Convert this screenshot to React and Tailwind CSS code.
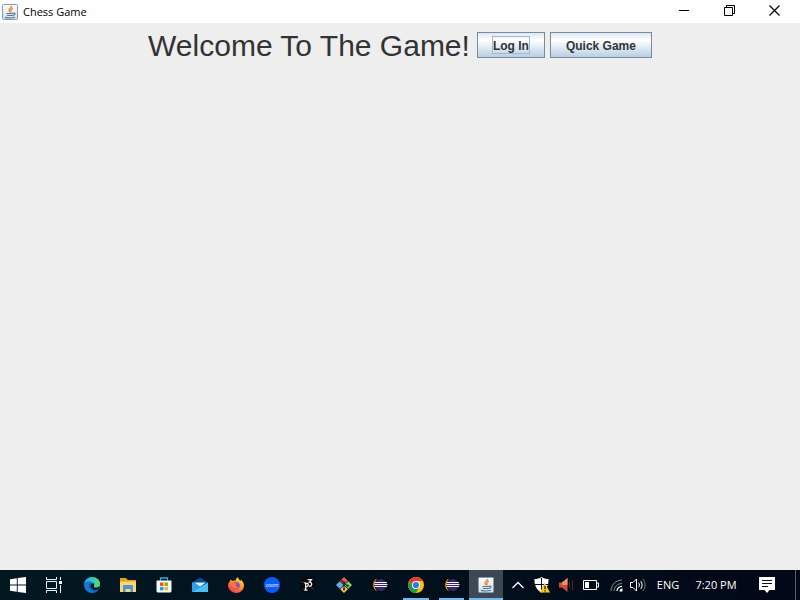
import React from "react";

function JavaIcon({ size = 16 }) {
  return (
    <svg width={size} height={size} viewBox="0 0 16 16" aria-hidden="true">
      <defs>
        <linearGradient id="javaTile" x1="0" y1="0" x2="0" y2="1">
          <stop offset="0" stopColor="#fdfdfd" />
          <stop offset="1" stopColor="#d5dde3" />
        </linearGradient>
      </defs>
      <rect x="0.5" y="0.5" width="15" height="15" rx="1" fill="url(#javaTile)" stroke="#7f9db5" />
      <path d="M9.8 2C10 3.8 6.4 4.4 7 6.2C7.2 7 8 7.4 8 8.3M10.8 4.4C8.8 5.2 8.4 6 9.1 7C9.3 7.5 9 8 8.6 8.3" fill="none" stroke="#e8842c" strokeWidth="1.3" />
      <path d="M4.5 9.5h6.5M5 11.5h5.5M3 13.4c2.5.6 7.5.6 10-.2M11 9.2c2.8-.6 2.6 1.8-.4 2.3" fill="none" stroke="#4b7799" strokeWidth="1.2" />
    </svg>
  );
}

function WindowButton({ label, children }) {
  return (
    <button type="button" aria-label={label} className="flex h-[21px] w-[45px] items-center justify-center">
      {children}
    </button>
  );
}

function TitleBar() {
  return (
    <header className="flex h-[23px] items-center bg-white pl-0.5 text-black">
      <JavaIcon />
      <h1 className="ml-[5px] flex-1 font-['Open_Sans','Noto_Sans',sans-serif] text-[11px] leading-4">Chess Game</h1>
      <div className="flex h-full items-start pr-[3px]">
        <WindowButton label="Minimize">
          <svg width="11" height="11" viewBox="0 0 11 11" stroke="#000">
            <path d="M0 5.5h10" />
          </svg>
        </WindowButton>
        <WindowButton label="Restore">
          <svg width="11" height="11" viewBox="0 0 11 11" fill="none" stroke="#000">
            <path d="M.5 2.5h8v8h-8zM2.5 2.5v-2h8v8h-2" />
          </svg>
        </WindowButton>
        <WindowButton label="Close">
          <svg width="11" height="11" viewBox="0 0 11 11" stroke="#000" strokeWidth="1.2">
            <path d="M.5.5l10 10M10.5.5l-10 10" />
          </svg>
        </WindowButton>
      </div>
    </header>
  );
}

function MetalButton({ focused, children }) {
  return (
    <button
      type="button"
      className="flex h-[26px] items-center justify-center border border-[#7a8a99] bg-linear-to-b from-[#dde8f3] via-white via-30% to-[#b8cfe5] px-[14px] font-['Liberation_Sans',Arial,sans-serif] text-xs font-bold text-[#333]"
    >
      <span
        className={`border pt-0.5 leading-[14px] whitespace-nowrap ${focused ? "border-[#a3b8cc]" : "border-transparent"}`}
      >
        {children}
      </span>
    </button>
  );
}

function WindowsIcon() {
  return (
    <svg width="16" height="16" viewBox="0 0 16 16" fill="#fff">
      <path d="M0 2.2L6.8 1.2v6.3H0zM7.7 1.1L16 0v7.5H7.7zM0 8.4h6.8v6.4L0 13.8zM7.7 8.4H16V16l-8.3-1.1z" />
    </svg>
  );
}

function TaskViewIcon() {
  return (
    <svg width="16" height="16" viewBox="0 0 16 16" fill="none" stroke="#e8edef">
      <path d="M.5 0v2.5h10V0M.5 4.5h10v7H.5zM.5 16v-2.5h10V16M14.5 0v3M14.5 8v8" />
      <path d="M13 4h3v3h-3z" fill="#fff" stroke="none" />
    </svg>
  );
}

function EdgeIcon() {
  return (
    <svg width="16" height="16" viewBox="0 0 16 16">
      <defs>
        <linearGradient id="edgeTop" x1="0" y1="0.4" x2="1" y2="0.4">
          <stop offset="0" stopColor="#1b9de2" />
          <stop offset="0.5" stopColor="#32c4c4" />
          <stop offset="1" stopColor="#62db57" />
        </linearGradient>
      </defs>
      <circle cx="8" cy="8" r="8" fill="#1479d0" />
      <path d="M.1 7C.8 2.9 4 0 8 0c4.6 0 8 3.2 8 6.7 0 2.5-1.9 4-4.1 4-2 0-2.7-.8-2.2-1.5.7-1.1.5-2.3-.4-3.2C7.1 4 2.1 4 .1 7z" fill="url(#edgeTop)" />
      <path d="M6 6.1C4.3 8 4.8 12 8.4 14c2.5 1.2 4.8.5 6.2-.8C10 15 6.5 12 6.8 9c.1-1 .5-1.7 1-2.1-.4-.6-1-.9-1.8-.8z" fill="#12529c" />
      <path d="M9.3 6.2c1.2 1 1 2.3.4 3-.5.7.2 1.5 2.2 1.5 1.5 0 2.8-.6 3.5-1.7-.2 1.5-.6 2.7-1.3 3.5-3.5 1.4-7.2-.5-7.2-3.5 0-1.3.8-2.5 2.4-2.8z" fill="#02131d" />
    </svg>
  );
}

function FolderIcon() {
  return (
    <svg width="16" height="14" viewBox="0 0 16 14">
      <path d="M0 0h6l2 2h8v12H0z" fill="#e5a11c" />
      <path d="M0 3.5h16V14H0z" fill="#ffd66b" />
      <path d="M3 7h10v7h-2.5v-3h-5v3H3z" fill="#4699dc" />
    </svg>
  );
}

function StoreIcon() {
  return (
    <svg width="16" height="16" viewBox="0 0 16 16">
      <path d="M4.5 4V1h7v3" fill="none" stroke="#30a9df" strokeWidth="1.3" />
      <path d="M.5 3.5h15V14a1.5 1.5 0 0 1-1.5 1.5H2A1.5 1.5 0 0 1 .5 14z" fill="#f4f5f6" />
      <path d="M4 5.5h3.5V9H4z" fill="#ef5126" />
      <path d="M8.5 5.5H12V9H8.5z" fill="#7fba00" />
      <path d="M4 10h3.5v3.3H4z" fill="#169fdf" />
      <path d="M8.5 10H12v3.3H8.5z" fill="#f9b513" />
    </svg>
  );
}

function MailIcon() {
  return (
    <svg width="16" height="16" viewBox="0 0 16 16">
      <path d="M0 5.5L8 .5l8 5v9.5H0z" fill="#0d4a94" />
      <path d="M0 5.5l8 5-8 4.5z" fill="#31a8ee" />
      <path d="M16 5.5V15H0z" fill="#48c0f6" />
      <path d="M2 5.5h12L8 9.8z" fill="#d5edfb" />
      <path d="M0 5.5h2l6 4L0 15z" fill="#2f9fe6" />
    </svg>
  );
}

function FirefoxIcon() {
  return (
    <svg width="16" height="16" viewBox="0 0 16 16">
      <defs>
        <linearGradient id="foxFire" x1="0.9" y1="0" x2="0.2" y2="1">
          <stop offset="0" stopColor="#fff24a" />
          <stop offset="0.45" stopColor="#ff9822" />
          <stop offset="1" stopColor="#f22958" />
        </linearGradient>
      </defs>
      <path d="M2.7 2.5l1.8 1.6C5.8 3.6 6.7 3.5 7.5 3.7 7.7 2 8.7.7 10 0c.3 2.2 1.5 2.8 2.6 4 .2-.6.1-1 0-1.5C14.7 4 16 6.4 16 8.9A7.8 7.8 0 0 1 8 16 7.8 7.8 0 0 1 0 8.4c0-1.5.5-2.7 1.3-3.7l.2 1C1.7 4.3 2 3.2 2.7 2.5z" fill="url(#foxFire)" />
      <circle cx="8.2" cy="8.5" r="3.6" fill="#814bd1" />
      <path d="M3.2 6.2c1.7-1.2 3.2-.8 4.1.2h1.9C9 7.5 7.7 7.6 7.3 8.4c.2 1.6 2 1.8 3.5.9-1 3.2-6.6 3.3-7.6-3.1z" fill="#ff7d26" />
    </svg>
  );
}

function ZoomIcon() {
  return (
    <span className="flex size-4 items-center justify-center rounded-full bg-[#0b5cff] font-['Open_Sans',sans-serif] text-[5px] leading-none text-white">
      zoom
    </span>
  );
}

function ProcessingIcon() {
  return (
    <svg width="16" height="16" viewBox="0 0 16 16">
      <circle cx="8" cy="8" r="7.8" fill="#080a0c" />
      <path d="M1.5 4.5l3 1.5M3 12.5l2-1.5M11.5 11l2.5 1.5" stroke="#3c464d" />
      <path d="M5.7 5.8v7.4M4.2 13.2h3.4M4.2 5.8h1.5M5.9 6.6c2.6-1.8 3.6 3 .2 3.2M7.6 2.6h3.8L9.4 5.1c3.4.2 2.8 4.6-.4 4.3" fill="none" stroke="#f1f3f4" strokeWidth="1.3" />
    </svg>
  );
}

function GitIcon() {
  return (
    <svg width="16" height="16" viewBox="0 0 16 16">
      <path d="M8 0l3.8 3.8L8 7.6 4.2 3.8z" fill="#f15b49" />
      <path d="M12.2 4.2L16 8l-3.8 3.8L8.4 8z" fill="#8ad06a" />
      <path d="M3.8 4.2L7.6 8l-3.8 3.8L0 8z" fill="#62a9ec" />
      <path d="M8 8.4l3.8 3.8L8 16l-3.8-3.8z" fill="#f3cb55" />
      <path d="M5.2 3L8 5.8v6.6M8 5.8l3.5 3" fill="none" stroke="#242424" strokeWidth="1.1" />
      <path d="M7 4.5h2v2H7zM10.7 7.7h2v2h-2zM7 11.3h2v2H7z" fill="#242424" />
    </svg>
  );
}

function EclipseIcon() {
  return (
    <svg width="16" height="16" viewBox="0 0 16 16">
      <path d="M5.2 1.6C-.2 3.8-.2 12.1 5.2 14.4 1.8 10.8 1.8 5.2 5.2 1.6z" fill="#f79420" />
      <circle cx="8.8" cy="8" r="6" fill="#352a67" />
      <path d="M3 5.5h12M2.5 7.5h13M3 9.5h12" stroke="#f4f2fb" />
    </svg>
  );
}

function ChromeIcon() {
  return (
    <svg width="16" height="16" viewBox="0 0 16 16">
      <circle cx="8" cy="8" r="8" fill="#fbc116" />
      <path d="M8 4h6.9A8 8 0 0 0 1.1 4l3.5 6L8 8z" fill="#e33b2e" />
      <path d="M1.1 4A8 8 0 0 0 8 16l3.5-6L8 8 4.6 10z" fill="#229b4b" />
      <circle cx="8" cy="8" r="4" fill="#fff" />
      <circle cx="8" cy="8" r="3.1" fill="#287de8" />
    </svg>
  );
}

function TaskButton({ label, width = "w-9", state = "idle", children }) {
  return (
    <button
      type="button"
      aria-label={label}
      className={`relative flex h-full shrink-0 items-center justify-center ${width} ${state === "active" ? "bg-[#3d4852]" : ""}`}
    >
      {children}
      {state === "running" && <span className="absolute inset-x-[5px] bottom-0 h-0.5 bg-[#76b9ed]" />}
      {state === "active" && <span className="absolute inset-x-0 bottom-0 h-0.5 bg-[#76b9ed]" />}
    </button>
  );
}

function TrayButton({ label, width, children }) {
  return (
    <button type="button" aria-label={label} className={`flex h-full shrink-0 items-center justify-center ${width}`}>
      {children}
    </button>
  );
}

function Tray() {
  return (
    <div className="ml-auto flex h-full items-center text-white">
      <TrayButton label="Show hidden icons" width="w-6">
        <svg width="12" height="8" viewBox="0 0 12 8" fill="none" stroke="#fff" strokeWidth="1.3">
          <path d="M.5 7L6 1.5 11.5 7" />
        </svg>
      </TrayButton>
      <TrayButton label="Security warning" width="w-6">
        <svg width="16" height="16" viewBox="0 0 16 16">
          <path d="M7.5 0C9.5 1.6 12 2 14.5 2c.3 6-2 11-7 13.5C2.5 13 .2 8 .5 2 3 2 5.5 1.6 7.5 0z" fill="#fff" />
          <path d="M7.5 1v14M1 7.5h13" stroke="#02101c" />
          <path d="M10.7 5.8L16 15.5H6z" fill="#fbc31d" />
          <path d="M11 9v3.3M11 13.2v1.3" stroke="#1b1b1b" strokeWidth="1.2" />
        </svg>
      </TrayButton>
      <TrayButton label="Audio application" width="w-6">
        <svg width="16" height="14" viewBox="0 0 16 14">
          <path d="M1 4.5h3L9.5 0v14L4 9.5H1z" fill="#c94f35" />
          <path d="M4 4.5L9.5 0v7H4z" fill="#f08d6c" />
          <path d="M11.5 4v6M14.5 2v10" stroke="#57251f" />
        </svg>
      </TrayButton>
      <TrayButton label="Battery" width="w-[26px]">
        <svg width="16" height="10" viewBox="0 0 16 10">
          <path d="M.5.5h13v9H.5zM14 3h1.5v4H14" fill="none" stroke="#fff" />
          <path d="M2 2h4v6H2z" fill="#fff" />
        </svg>
      </TrayButton>
      <TrayButton label="Network" width="w-6">
        <svg width="13" height="13" viewBox="0 0 13 13" fill="none">
          <path d="M1 12C1 6 6 1 12 1M4 12c0-4 3.5-7.5 8-7.5" stroke="#87919a" />
          <path d="M7 12c0-2.5 2.2-4.7 5-4.7" stroke="#fff" strokeWidth="1.2" />
          <path d="M9.5 12.5a3 3 0 0 1 3-3v3z" fill="#fff" />
        </svg>
      </TrayButton>
      <TrayButton label="Volume" width="w-5">
        <svg width="16" height="14" viewBox="0 0 16 14" fill="none" stroke="#fff">
          <path d="M.5 4.5H3L6.5 1v12L3 9.5H.5zM8.5 4.7c1.2 1.4 1.2 3.2 0 4.6M10.6 3c2 2.3 2 5.7 0 8" />
          <path d="M12.8 1c3 3.5 3 8.5 0 12" stroke="#6d7983" />
        </svg>
      </TrayButton>
      <button type="button" className="h-full w-10 shrink-0 font-['Open_Sans','Noto_Sans',sans-serif] text-[11px] leading-4">
        ENG
      </button>
      <button type="button" className="h-full w-14 shrink-0 font-['Open_Sans','Noto_Sans',sans-serif] text-[11px] leading-4 whitespace-nowrap">
        7:20 PM
      </button>
      <TrayButton label="Notifications" width="w-[46px]">
        <svg width="16" height="16" viewBox="0 0 16 16">
          <path d="M0 0h16v13h-5.5L8 16l-2.5-3H0z" fill="#fff" />
          <path d="M3 3.5h10M3 6.5h10M3 9.5h6" stroke="#02101c" />
        </svg>
      </TrayButton>
      <span className="ml-[5px] h-full w-px bg-[#59616b]" />
      <span className="w-1" />
    </div>
  );
}

function TaskBar() {
  return (
    <footer className="flex h-[30px] items-center bg-linear-to-r from-[#021821] to-[#010818]">
      <TaskButton label="Start"><WindowsIcon /></TaskButton>
      <TaskButton label="Task View"><TaskViewIcon /></TaskButton>
      <div className="ml-0.5 flex h-full">
        <TaskButton label="Microsoft Edge"><EdgeIcon /></TaskButton>
        <TaskButton label="File Explorer"><FolderIcon /></TaskButton>
        <TaskButton label="Microsoft Store"><StoreIcon /></TaskButton>
        <TaskButton label="Mail"><MailIcon /></TaskButton>
        <TaskButton label="Firefox"><FirefoxIcon /></TaskButton>
        <TaskButton label="Zoom"><ZoomIcon /></TaskButton>
        <TaskButton label="Processing"><ProcessingIcon /></TaskButton>
        <TaskButton label="Git"><GitIcon /></TaskButton>
        <TaskButton label="Eclipse"><EclipseIcon /></TaskButton>
        <TaskButton label="Chrome" state="running"><ChromeIcon /></TaskButton>
        <TaskButton label="Eclipse workspace" width="w-[35px]" state="running"><EclipseIcon /></TaskButton>
        <TaskButton label="Chess Game" width="w-[34px]" state="active"><JavaIcon /></TaskButton>
      </div>
      <Tray />
    </footer>
  );
}

export default function App() {
  return (
    <div className="flex min-h-screen flex-col bg-[#eee]">
      <TitleBar />
      <main className="flex flex-1 items-start justify-center gap-[7px] pt-[5px]">
        <h2 className="font-['Liberation_Sans',Arial,sans-serif] text-[30px] leading-[35px] whitespace-nowrap text-[#333]">
          Welcome To The Game!
        </h2>
        <div className="flex gap-[5px] pt-1">
          <MetalButton focused>Log In</MetalButton>
          <MetalButton>Quick Game</MetalButton>
        </div>
      </main>
      <TaskBar />
    </div>
  );
}
